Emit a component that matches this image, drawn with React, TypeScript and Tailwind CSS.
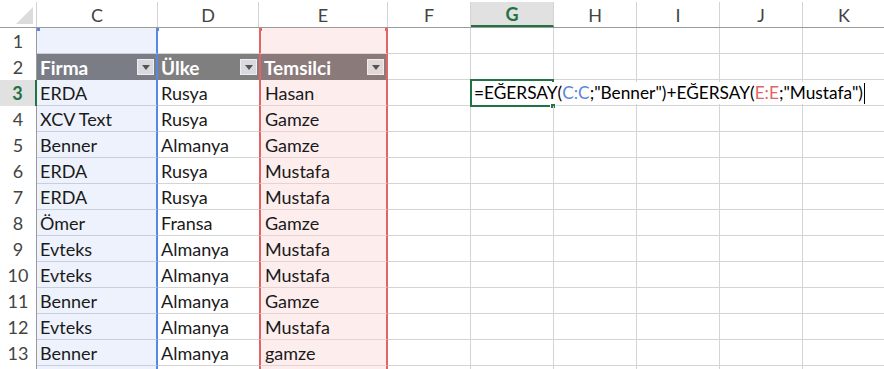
const rows: [string, string, string][] = [
	["ERDA", "Rusya", "Hasan"],
	["XCV Text", "Rusya", "Gamze"],
	["Benner", "Almanya", "Gamze"],
	["ERDA", "Rusya", "Mustafa"],
	["ERDA", "Rusya", "Mustafa"],
	["Ömer", "Fransa", "Gamze"],
	["Evteks", "Almanya", "Mustafa"],
	["Evteks", "Almanya", "Mustafa"],
	["Benner", "Almanya", "Gamze"],
	["Evteks", "Almanya", "Mustafa"],
	["Benner", "Almanya", "gamze"],
];

const letters = [
	{ l: "C", w: "w-[121px]" },
	{ l: "D", w: "w-[101px]" },
	{ l: "E", w: "w-[129px]" },
	{ l: "F", w: "w-[83px]" },
	{ l: "G", w: "w-[83px]" },
	{ l: "H", w: "w-[83px]" },
	{ l: "I", w: "w-[83px]" },
	{ l: "J", w: "w-[83px]" },
	{ l: "K", w: "w-[83px]" },
];

function Dropdown({ pink }: { pink?: boolean }) {
	return (
		<div
			className={`ml-auto mr-[2px] flex h-[16px] w-[17px] items-center justify-center border ${
				pink ? "border-[#f3eaea] bg-[#e2d8d8]" : "border-[#eeeef2] bg-[#d9dadf]"
			}`}
		>
			<svg width="8" height="5" viewBox="0 0 8 5">
				<path d="M0 0 H8 L4 5 Z" fill="#555" />
			</svg>
		</div>
	);
}

function RowHead({ n, active }: { n?: number; active?: boolean }) {
	return (
		<div
			className={`flex h-full w-[37px] shrink-0 items-center justify-center ${
				active
					? "border-r-2 border-r-[#217346] bg-[#e1e1e1] font-bold text-[#217346]"
					: "border-r border-r-[#9b9b9b] text-[#444]"
			}`}
		>
			{n}
		</div>
	);
}

function EmptyCells({ active }: { active?: boolean }) {
	return (
		<>
			<div className="h-full w-[83px] shrink-0 border-r border-b border-[#d4d4d4]" />
			<div className="relative h-full w-[83px] shrink-0 border-r border-b border-[#d4d4d4]">
				{active && (
					<>
						<div className="absolute -top-[1px] -left-[1px] h-[28px] w-[84px] border-2 border-[#217346]" />
						<div className="absolute top-[23px] left-[79px] h-[6px] w-[6px] border border-white bg-[#217346]" />
						<div className="absolute top-[2px] left-[2px] flex h-[22px] items-center whitespace-nowrap bg-white pl-[1px] pr-[2px] text-[17.3px] text-black">
							<span>=EĞERSAY(</span>
							<span className="text-[#5b87e0]">C:C</span>
							<span>;"Benner")+EĞERSAY(</span>
							<span className="text-[#e36464]">E:E</span>
							<span>;"Mustafa")</span>
							<span className="ml-[1px] h-[21px] w-[1px] bg-black" />
						</div>
					</>
				)}
			</div>
			<div className="h-full w-[83px] shrink-0 border-r border-b border-[#d4d4d4]" />
			<div className="h-full w-[83px] shrink-0 border-r border-b border-[#d4d4d4]" />
			<div className="h-full w-[83px] shrink-0 border-r border-b border-[#d4d4d4]" />
			<div className="h-full w-[83px] shrink-0 border-r border-b border-[#d4d4d4]" />
			<div className="h-full w-[83px] shrink-0 border-r border-b border-[#d4d4d4]" />
		</>
	);
}

export default function App() {
	return (
		<div
			className="h-[369px] w-[884px] overflow-hidden bg-white text-[18px] leading-none text-[#1a1a1a]"
			style={{ fontFamily: "Lato, 'Noto Sans', sans-serif" }}
		>
			{/* column letters */}
			<div className="flex h-[28px] items-end border-b border-[#9b9b9b]">
				<div className="relative h-[25px] w-[37px] shrink-0 border-r border-[#d4d4d4]">
					<svg className="absolute top-[5px] left-[16px]" width="17" height="17" viewBox="0 0 17 17">
						<path d="M17 0 V17 H0 Z" fill="#dcdcdc" />
					</svg>
				</div>
				{letters.map((c) => (
					<div
						key={c.l}
						className={`flex h-[25px] shrink-0 items-center justify-center border-r border-[#d4d4d4] ${c.w} ${
							c.l === "G" ? "border-b-2 border-b-[#217346] bg-[#e1e1e1] font-bold text-[#217346]" : "text-[#444]"
						}`}
					>
						{c.l}
					</div>
				))}
			</div>

			{/* row 1 */}
			<div className="relative flex h-[26px]">
				<RowHead n={1} />
				<div className="h-full w-[121px] shrink-0 border-r-2 border-b border-r-[#5b87e0] border-b-[#c9cedb] bg-[#edf2fc]" />
				<div className="h-full w-[101px] shrink-0 border-b border-[#d4d4d4]" />
				<div className="h-full w-[129px] shrink-0 border-x-2 border-b border-x-[#e36464] border-b-[#e4d3d3] bg-[#fdeded]" />
				<EmptyCells />
				<div className="absolute top-0 left-[37px] h-[3px] w-[3px] bg-[#5b87e0]" />
				<div className="absolute top-0 left-[156px] h-[3px] w-[3px] bg-[#5b87e0]" />
				<div className="absolute top-0 left-[259px] h-[3px] w-[3px] bg-[#e36464]" />
				<div className="absolute top-0 left-[385px] h-[3px] w-[3px] bg-[#e36464]" />
			</div>

			{/* row 2: table headers */}
			<div className="flex h-[26px]">
				<RowHead n={2} />
				<div className="flex h-full w-[121px] shrink-0 items-center border-r-2 border-r-[#5b87e0] bg-[#7b7d86] pl-[3px] text-[19px] font-bold text-white">
					Firma
					<Dropdown />
				</div>
				<div className="flex h-full w-[101px] shrink-0 items-center bg-[#7f7f7f] pl-[3px] text-[19px] font-bold text-white">
					Ülke
					<Dropdown />
				</div>
				<div className="flex h-full w-[129px] shrink-0 items-center border-x-2 border-x-[#e36464] bg-[#8b7a7a] pl-[3px] text-[19px] font-bold text-white">
					Temsilci
					<Dropdown pink />
				</div>
				<EmptyCells />
			</div>

			{/* data rows */}
			{rows.map((r, i) => (
				<div key={i} className="flex h-[26px]">
					<RowHead n={i + 3} active={i === 0} />
					<div className="flex h-full w-[121px] shrink-0 items-center border-r-2 border-b border-r-[#5b87e0] border-b-[#c9cedb] bg-[#edf2fc] pl-[3px]">
						{r[0]}
					</div>
					<div className="flex h-full w-[101px] shrink-0 items-center border-b border-[#d4d4d4] pl-[3px]">
						{r[1]}
					</div>
					<div className="flex h-full w-[129px] shrink-0 items-center border-x-2 border-b border-x-[#e36464] border-b-[#e4d3d3] bg-[#fdeded] pl-[4px]">
						{r[2]}
					</div>
					<EmptyCells active={i === 0} />
				</div>
			))}

			{/* partial row 14 */}
			<div className="flex h-[26px]">
				<RowHead />
				<div className="h-full w-[121px] shrink-0 border-r-2 border-r-[#5b87e0] bg-[#edf2fc]" />
				<div className="h-full w-[101px] shrink-0" />
				<div className="h-full w-[129px] shrink-0 border-x-2 border-x-[#e36464] bg-[#fdeded]" />
				<EmptyCells />
			</div>
		</div>
	);
}
